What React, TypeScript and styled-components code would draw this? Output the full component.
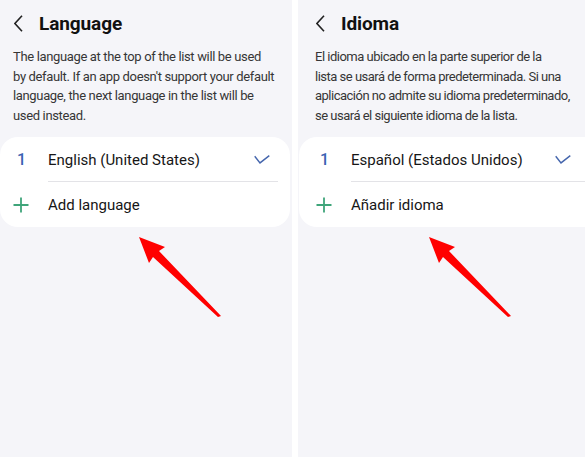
import styled, { createGlobalStyle } from 'styled-components'

const GlobalStyle = createGlobalStyle`
  html, body {
    margin: 0;
    padding: 0;
    background: #ffffff;
  }
  body {
    font-family: Roboto, "Noto Sans", Arial, sans-serif;
  }
`

const Screen = styled.div`
  display: flex;
  gap: 6px;
  width: 585px;
  height: 457px;
  background: #ffffff;
  overflow: hidden;
`

const Panel = styled.section<{ $width: number; $inset: number }>`
  position: relative;
  flex: 0 0 ${(p) => p.$width}px;
  height: 100%;
  background: #f5f5f9;
  overflow: hidden;
  padding-top: 10px;
  box-sizing: border-box;

  --inset: ${(p) => p.$inset}px;
`

const Header = styled.header`
  display: flex;
  align-items: center;
  height: 26px;
  padding-left: calc(var(--inset) + 14px);
  gap: 16px;
`

const Back = styled.svg`
  width: 9px;
  height: 17px;
  flex: none;
`

const Title = styled.h1`
  margin: 0;
  font-size: 19px;
  font-weight: 700;
  color: #111111;
  letter-spacing: -0.1px;
`

const Description = styled.div<{ $tracking: number }>`
  margin: 11px 0 0;
  padding-left: calc(var(--inset) + 13px);
  font-size: 13px;
  line-height: 19.5px;
  letter-spacing: ${(p) => p.$tracking}px;
  color: #363636;
`

const Line = styled.div`
  white-space: nowrap;
`

const Card = styled.div<{ $left: number; $right: number; $pad: number }>`
  margin: 12px ${(p) => p.$right}px 0 ${(p) => p.$left}px;
  background: #ffffff;
  border-radius: 18px;
  padding: 0 ${(p) => p.$pad}px 0 0;
`

const Row = styled.div<{ $divider?: boolean }>`
  display: grid;
  grid-template-columns: calc(var(--inset) + 48px) 1fr auto;
  align-items: center;
  height: 45px;
  position: relative;

  ${(p) =>
    p.$divider &&
    `
    &::after {
      content: '';
      position: absolute;
      left: calc(var(--inset) + 48px);
      right: 0;
      bottom: 0;
      height: 1px;
      background: #e3e3e7;
    }
  `}
`

const Lead = styled.span`
  padding-left: calc(var(--inset) + 17px);
  font-size: 16px;
  font-weight: 500;
  color: #3a63b3;
`

const PlusLead = styled.span`
  padding-left: calc(var(--inset) + 13px);
  display: flex;
`

const Label = styled.span`
  font-size: 15px;
  color: #161616;
`

const Check = styled.svg<{ $gap: number }>`
  width: 16px;
  height: 9px;
  margin-right: ${(p) => p.$gap}px;
`

const Arrow = styled.svg<{ $x: number; $y: number }>`
  position: absolute;
  left: ${(p) => p.$x}px;
  top: ${(p) => p.$y}px;
  width: 86px;
  height: 84px;
`

type PanelProps = {
  width: number
  inset: number
  title: string
  lines: string[]
  tracking: number
  lang: string
  add: string
  cardLeft: number
  cardRight: number
  cardPad: number
  checkGap: number
  arrowX: number
}

function LanguagePanel(p: PanelProps) {
  return (
    <Panel $width={p.width} $inset={p.inset}>
      <Header>
        <Back viewBox="0 0 9 17">
          <polyline points="8,0.8 0.9,8.5 8,16.2" fill="none" stroke="#222" strokeWidth="1.6" />
        </Back>
        <Title>{p.title}</Title>
      </Header>
      <Description $tracking={p.tracking}>
        {p.lines.map((l) => (
          <Line key={l}>{l}</Line>
        ))}
      </Description>
      <Card $left={p.cardLeft} $right={p.cardRight} $pad={p.cardPad}>
        <Row $divider>
          <Lead>1</Lead>
          <Label>{p.lang}</Label>
          <Check $gap={p.checkGap} viewBox="0 0 16 9">
            <polyline points="0.7,1.2 6,7.9 15.3,0.6" fill="none" stroke="#4566ad" strokeWidth="1.4" />
          </Check>
        </Row>
        <Row>
          <PlusLead>
            <svg width="16" height="16" viewBox="0 0 16 16">
              <path d="M8 0.5 V15.5 M0.5 8 H15.5" stroke="#3fa57a" strokeWidth="1.8" />
            </svg>
          </PlusLead>
          <Label>{p.add}</Label>
          <span />
        </Row>
      </Card>
      <Arrow $x={p.arrowX} $y={234} viewBox="0 0 86 84">
        <polygon
          points="2,3 28,13 22,17 84,82 81,83 16,23 12,29"
          fill="#ff0000"
        />
      </Arrow>
    </Panel>
  )
}

export default function App() {
  return (
    <>
      <GlobalStyle />
      <Screen>
        <LanguagePanel
          width={292}
          inset={0}
          title="Language"
          lines={[
            'The language at the top of the list will be used',
            "by default. If an app doesn't support your default",
            'language, the next language in the list will be',
            'used instead.',
          ]}
          tracking={-0.35}
          lang="English (United States)"
          add="Add language"
          cardLeft={0}
          cardRight={2}
          cardPad={12}
          checkGap={8}
          arrowX={137}
        />
        <LanguagePanel
          width={287}
          inset={4}
          title="Idioma"
          lines={[
            'El idioma ubicado en la parte superior de la',
            'lista se usará de forma predeterminada. Si una',
            'aplicación no admite su idioma predeterminado,',
            'se usará el siguiente idioma de la lista.',
          ]}
          tracking={-0.5}
          lang="Español (Estados Unidos)"
          add="Añadir idioma"
          cardLeft={1}
          cardRight={-20}
          cardPad={0}
          checkGap={34}
          arrowX={129}
        />
      </Screen>
    </>
  )
}
